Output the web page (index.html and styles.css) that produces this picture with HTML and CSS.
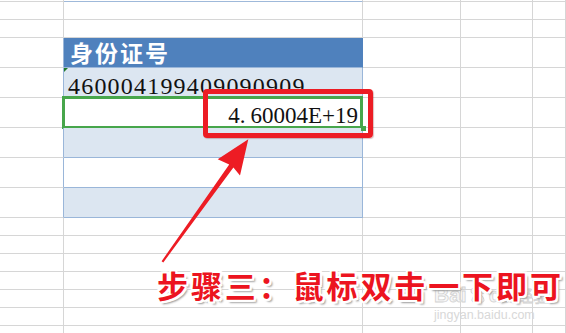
FILE: index.html
```html
<!DOCTYPE html>
<html lang="zh-CN">
<head>
<meta charset="utf-8">
<title>身份证号</title>
<link rel="stylesheet" href="styles.css">
</head>
<body>
<div class="page">
  <div class="sheet">
    <!-- r0 -->
    <div class="c"></div><div class="c b top"></div><div class="c"></div><div class="c"></div><div class="c"></div>
    <!-- r1 -->
    <div class="c"></div><div class="c b"></div><div class="c"></div><div class="c"></div><div class="c"></div>
    <!-- r2 -->
    <div class="c"></div><div class="c b"></div><div class="c"></div><div class="c"></div><div class="c"></div>
    <!-- r3 header -->
    <div class="c ta"></div><div class="c b hd">身份证号</div><div class="c"></div><div class="c"></div><div class="c"></div>
    <!-- r4 -->
    <div class="c ta"></div><div class="c b tr lt num err">460004199409090909</div><div class="c"></div><div class="c"></div><div class="c"></div>
    <!-- r5 -->
    <div class="c ta"></div><div class="c b tr sel sci">4<span class="dot">.</span>60004E+19</div><div class="c"></div><div class="c"></div><div class="c"></div>
    <!-- r6 -->
    <div class="c ta"></div><div class="c b tr lt"></div><div class="c"></div><div class="c"></div><div class="c"></div>
    <!-- r7 -->
    <div class="c ta"></div><div class="c b tr"></div><div class="c"></div><div class="c"></div><div class="c"></div>
    <!-- r8 -->
    <div class="c ta"></div><div class="c b tr lt"></div><div class="c"></div><div class="c"></div><div class="c"></div>
    <!-- r9-r15 -->
    <div class="c"></div><div class="c b"></div><div class="c"></div><div class="c"></div><div class="c"></div>
    <div class="c"></div><div class="c b"></div><div class="c"></div><div class="c"></div><div class="c"></div>
    <div class="c"></div><div class="c b"></div><div class="c"></div><div class="c"></div><div class="c"></div>
    <div class="c"></div><div class="c b"></div><div class="c"></div><div class="c"></div><div class="c"></div>
    <div class="c"></div><div class="c b"></div><div class="c"></div><div class="c"></div><div class="c"></div>
    <div class="c"></div><div class="c b"></div><div class="c"></div><div class="c"></div><div class="c"></div>
    <div class="c"></div><div class="c b"></div><div class="c"></div><div class="c"></div><div class="c"></div>
  </div>

  <div class="redbox"></div>

  <svg class="arrow" width="566" height="333" viewBox="0 0 566 333" aria-hidden="true">
    <polygon points="248.3,139.3 240,175.5 233.4,167.6 163.3,262.4 161.6,261.2 229.2,164.6 217.7,159.3" fill="#ed1c24"/>
  </svg>

  <div class="note">步骤三：鼠标双击一下即可</div>

  <div class="wm">
    <div class="wm-logo">Bai<svg class="paw" width="20" height="18" viewBox="0 0 20 18"><g fill="#f6f6f6" stroke="#d4d4d4" stroke-width="1"><ellipse cx="5" cy="5" rx="2" ry="2.6"/><ellipse cx="10" cy="3" rx="2" ry="2.5"/><ellipse cx="15" cy="5" rx="2" ry="2.6"/><path d="M4 15 C4 10 8 8 10 8 C12 8 16 10 16 15 C16 17 4 17 4 15 Z"/></g></svg>du<span class="wm-cn">经验</span></div>
    <div class="wm-url">jingyan.baidu.com</div>
  </div>
</div>
</body>
</html>
```

FILE: styles.css
```css
html, body {
  margin: 0;
  padding: 0;
  background: #ffffff;
}

.page {
  position: relative;
  width: 566px;
  height: 333px;
  overflow: hidden;
}

.sheet {
  display: grid;
  grid-template-columns: 64px 299px 98px 72px 1fr;
  grid-template-rows: 2px 18px 18px repeat(6, 30px) repeat(7, 18px);
}

.c {
  box-sizing: border-box;
  border-right: 1px solid #d6d6d6;
  border-bottom: 1px solid #d6d6d6;
  position: relative;
  white-space: nowrap;
}

.b.top {
  border-bottom-color: #9fb9da;
}

.ta {
  border-right-color: #9ab6d9;
}

.hd {
  background: #4f81bd;
  border-right-color: #4f81bd;
  border-bottom-color: #9ab6d9;
  color: #ffffff;
  font-family: "Noto Sans CJK SC", "Liberation Sans", sans-serif;
  font-weight: 700;
  font-size: 23px;
  letter-spacing: 2px;
  line-height: 29px;
  padding-left: 6px;
}

.tr {
  border-right-color: #9ab6d9;
  border-bottom-color: #9ab6d9;
}

.lt {
  background: #dce6f1;
}

.num {
  font-family: "Liberation Serif", serif;
  font-size: 24px;
  letter-spacing: 1.2px;
  line-height: 26px;
  padding: 5px 0 0 4px;
  color: #111111;
}

.err::before {
  content: "";
  position: absolute;
  left: 0;
  top: 0;
  border-top: 4px solid #1e7a2a;
  border-right: 4px solid transparent;
}

.sci {
  font-family: "Liberation Serif", serif;
  font-size: 23px;
  line-height: 26px;
  padding: 5px 4px 0 0;
  text-align: right;
  color: #111111;
}

.dot {
  margin-right: 5px;
}

.sel::after {
  content: "";
  position: absolute;
  left: -2px;
  top: -2px;
  right: -1px;
  bottom: -2px;
  border: 3px solid #47a64b;
}

.sel::before {
  content: "";
  position: absolute;
  right: -4px;
  bottom: -4px;
  width: 5px;
  height: 5px;
  background: #47a64b;
  z-index: 2;
}

.redbox {
  position: absolute;
  left: 203px;
  top: 89px;
  width: 170px;
  height: 49px;
  box-sizing: border-box;
  border: 5px solid #ec1c24;
  border-radius: 4px;
  box-shadow: 1px 1px 1px rgba(120, 0, 0, 0.25);
}

.arrow {
  position: absolute;
  left: 0;
  top: 0;
}

.note {
  position: absolute;
  left: 157px;
  top: 269px;
  font-family: "Noto Sans CJK SC", sans-serif;
  font-weight: 700;
  font-size: 31px;
  line-height: 32px;
  letter-spacing: 2.9px;
  color: #ec1420;
  white-space: nowrap;
  z-index: 2;
  text-shadow:
    2px 0 0 #fff, -2px 0 0 #fff, 0 2px 0 #fff, 0 -2px 0 #fff,
    2px 2px 0 #fff, -2px -2px 0 #fff, 2px -2px 0 #fff, -2px 2px 0 #fff,
    3px 3px 2px #9a9a9a;
}

.wm {
  position: absolute;
  left: 434px;
  top: 284px;
  display: flex;
  flex-direction: column;
  align-items: flex-start;
}

.wm-logo {
  display: flex;
  align-items: center;
  font-family: "Liberation Sans", sans-serif;
  font-weight: 700;
  font-size: 21px;
  line-height: 22px;
  color: #f7f7f7;
  -webkit-text-stroke: 0.8px #d2d2d2;
}

.paw {
  margin: 0 1px;
}

.wm-cn {
  font-family: "Noto Sans CJK SC", sans-serif;
  font-weight: 400;
  font-size: 16px;
  margin-left: 3px;
}

.wm-url {
  font-family: "Liberation Sans", sans-serif;
  font-size: 12.5px;
  line-height: 14px;
  color: #d8d8d8;
  margin-top: 2px;
}
```
